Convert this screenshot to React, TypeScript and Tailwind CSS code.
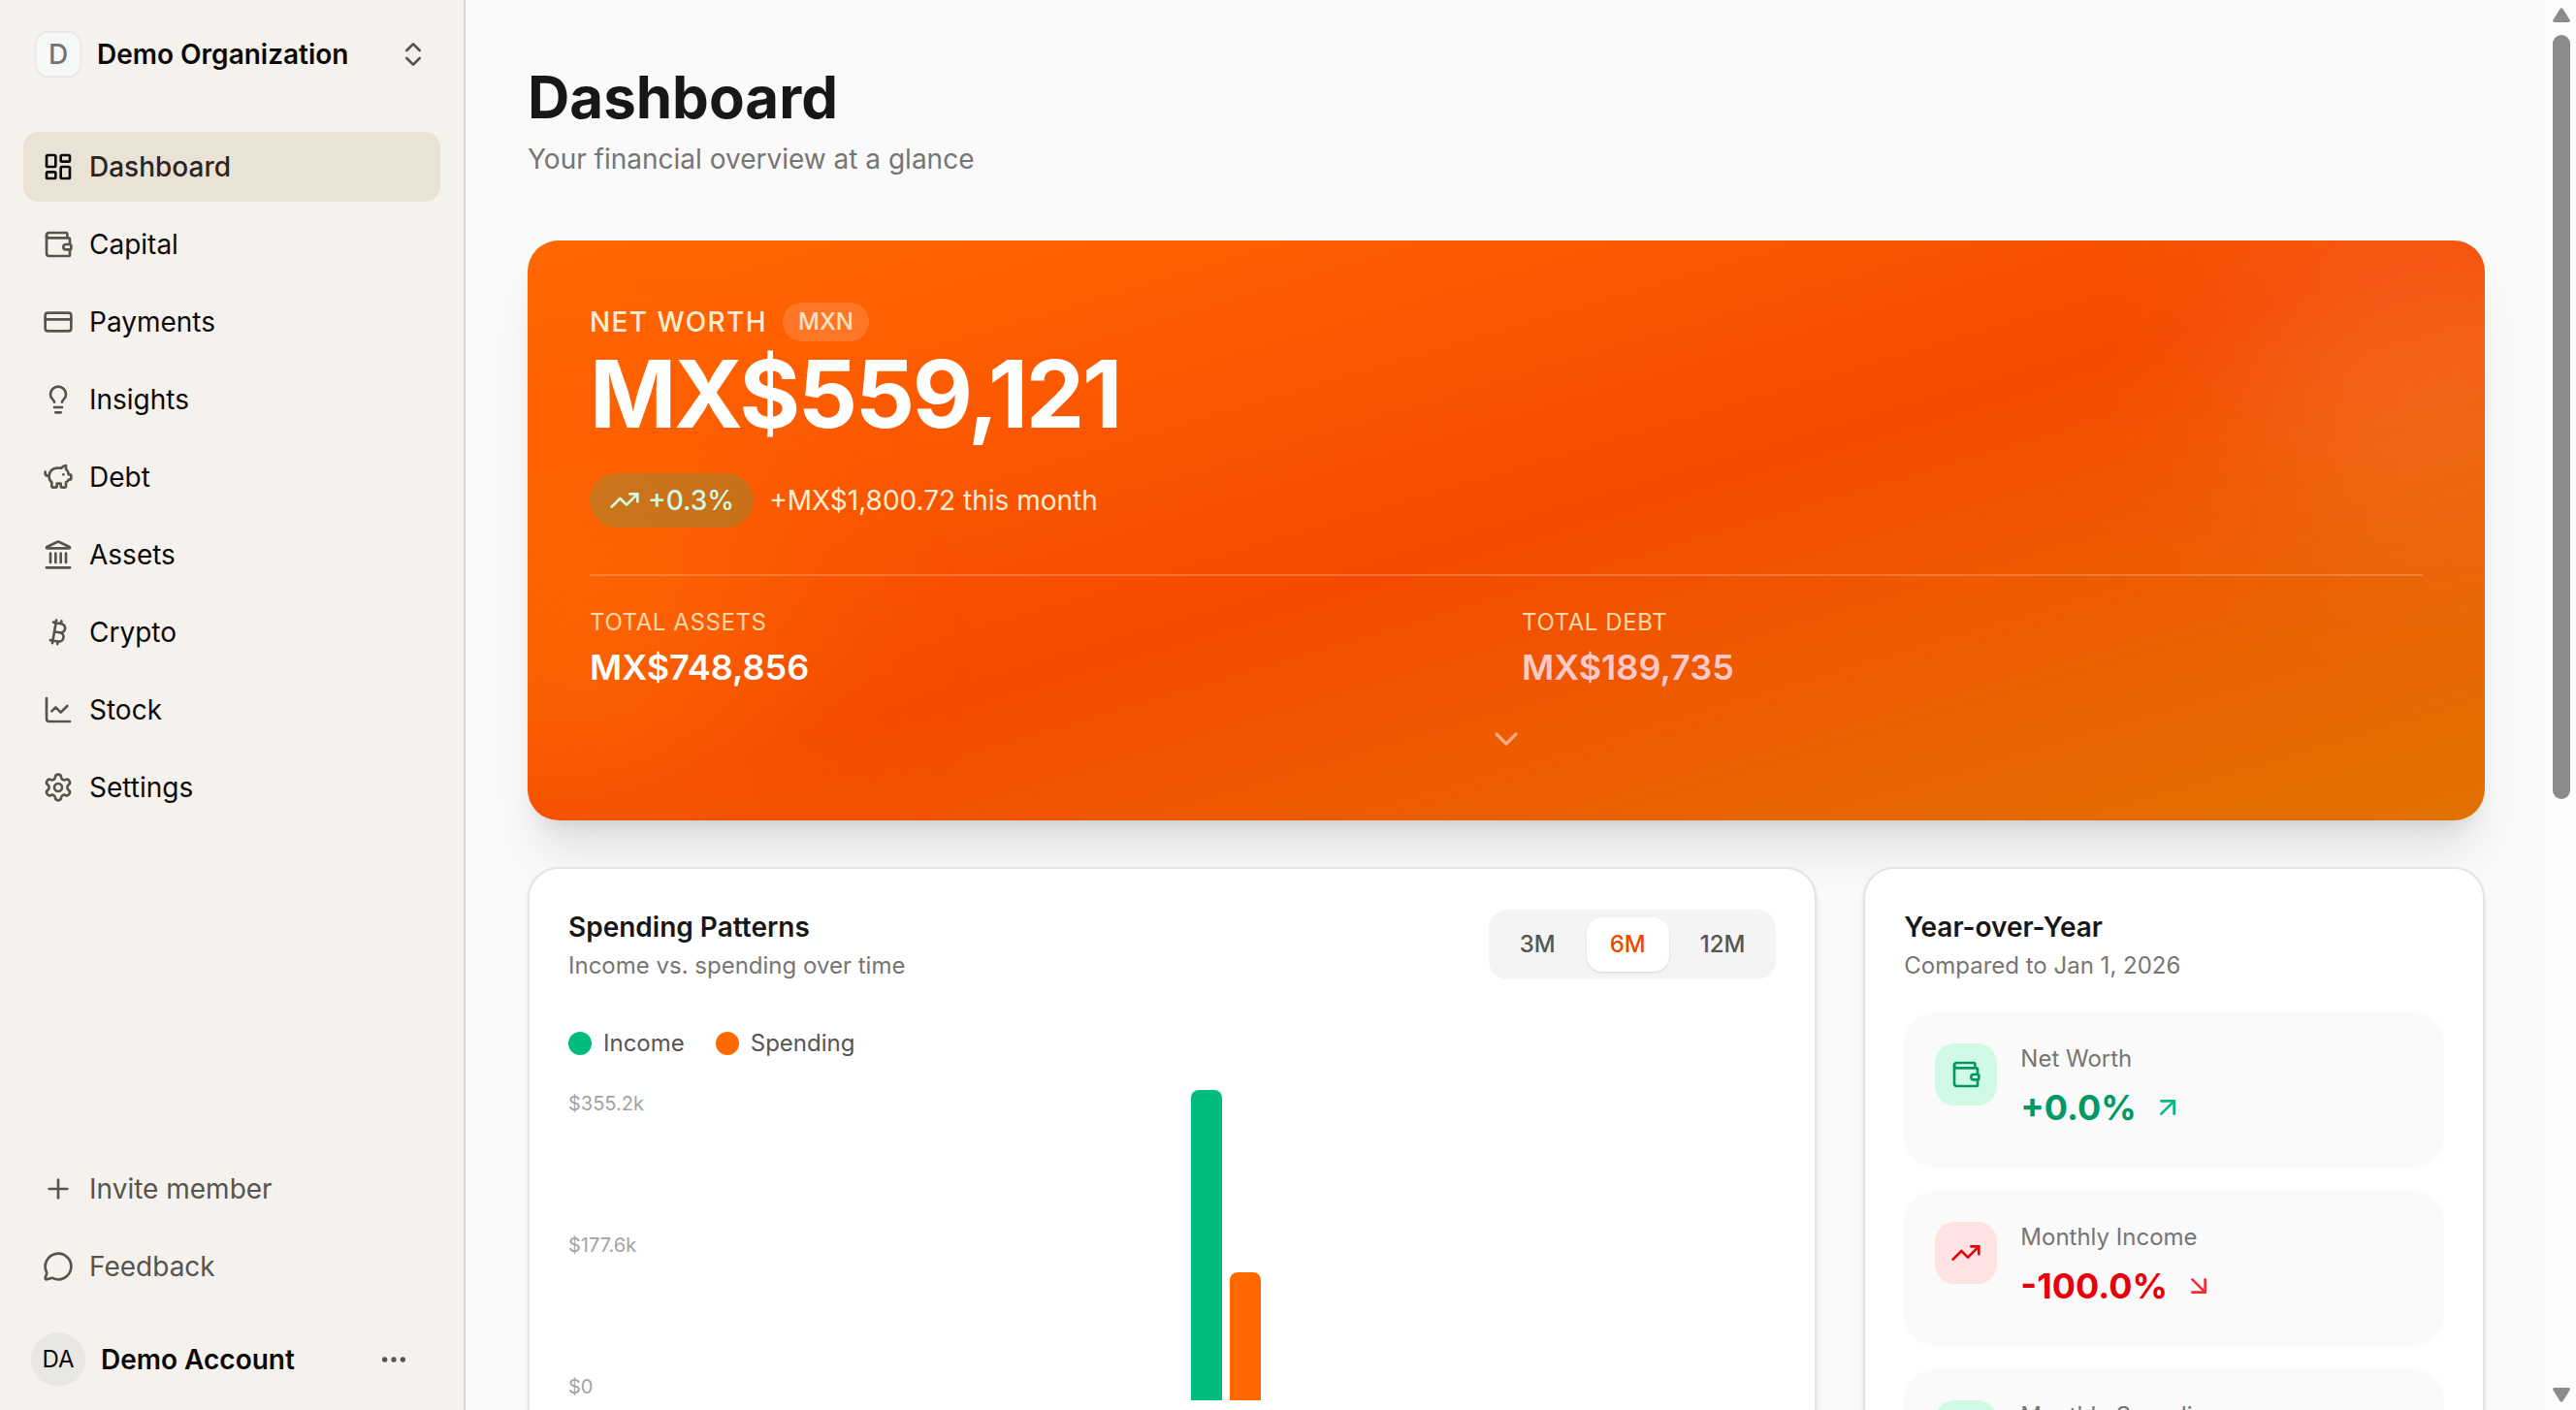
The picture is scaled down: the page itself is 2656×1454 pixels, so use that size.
import type { ReactNode } from "react";
import {
  ArrowDownRight,
  ArrowUpRight,
  Bitcoin,
  ChartLine,
  ChevronDown,
  ChevronsUpDown,
  CreditCard,
  Ellipsis,
  Landmark,
  LayoutDashboard,
  Lightbulb,
  MessageCircle,
  PiggyBank,
  Plus,
  Settings,
  TrendingDown,
  TrendingUp,
  Wallet,
  type LucideIcon,
} from "lucide-react";

const navItems: { label: string; icon: LucideIcon; active?: boolean }[] = [
  { label: "Dashboard", icon: LayoutDashboard, active: true },
  { label: "Capital", icon: Wallet },
  { label: "Payments", icon: CreditCard },
  { label: "Insights", icon: Lightbulb },
  { label: "Debt", icon: PiggyBank },
  { label: "Assets", icon: Landmark },
  { label: "Crypto", icon: Bitcoin },
  { label: "Stock", icon: ChartLine },
  { label: "Settings", icon: Settings },
];

function Sidebar() {
  return (
    <aside className="flex w-[480px] shrink-0 flex-col border-r-2 border-[#d8d6d4] bg-[#f5f1ed] px-6 pt-4 pb-6">
      <button className="flex h-20 items-center gap-4 rounded-2xl px-3 text-left">
        <span className="flex size-12 items-center justify-center rounded-[14px] border-2 border-[#e9eae9] bg-[#f7f8f8] text-[28px] font-medium text-[#737373]">
          D
        </span>
        <span className="flex-1 text-[28px] leading-10 font-semibold text-[#0c0a09]">Demo Organization</span>
        <ChevronsUpDown className="size-8 text-[#57534d]" />
      </button>

      <nav className="mt-10 flex flex-col gap-2">
        {navItems.map(({ label, icon: Icon, active }) => (
          <a
            key={label}
            href="#"
            aria-current={active ? "page" : undefined}
            className={
              active
                ? "flex h-18 items-center gap-4 rounded-2xl bg-[#ebe2d6] px-5 text-[28px] font-medium text-[#292524]"
                : "flex h-18 items-center gap-4 rounded-2xl px-5 text-[28px] text-[#0c0a09]"
            }
          >
            <Icon className={active ? "size-8 text-[#0c0a09]" : "size-8 text-[#57534d]"} />
            {label}
          </a>
        ))}
      </nav>

      <div className="mt-auto flex flex-col gap-2">
        <button className="flex h-18 items-center gap-4 rounded-2xl px-5 text-[28px] text-[#57534d]">
          <Plus className="size-8" />
          Invite member
        </button>
        <button className="flex h-18 items-center gap-4 rounded-2xl px-5 text-[28px] text-[#57534d]">
          <MessageCircle className="size-8" />
          Feedback
        </button>
      </div>

      <button className="mt-8 flex items-center gap-4 pr-8 pl-2 text-left">
        <span className="flex size-14 items-center justify-center rounded-full bg-[#e8e7e3] text-2xl text-[#0c0a09]">
          DA
        </span>
        <span className="flex-1 text-[28px] leading-10 font-semibold text-[#0c0a09]">Demo Account</span>
        <Ellipsis className="size-8 text-[#57534d]" />
      </button>
    </aside>
  );
}

function HeroCard() {
  return (
    <section className="relative overflow-hidden rounded-[32px] bg-linear-to-br from-orange-500 via-orange-600 to-amber-600 p-16">
      <div className="absolute -top-16 -right-32 size-96 rounded-full bg-white/10 blur-[96px]" />
      <div className="absolute -bottom-4 -left-32 size-96 rounded-full bg-orange-400/30 blur-[96px]" />
      <div className="relative">
        <div className="flex items-center gap-4">
          <h2 className="text-[28px] leading-10 font-medium tracking-wider text-orange-100 uppercase">Net Worth</h2>
          <span className="rounded-full bg-white/15 px-4 text-2xl leading-10 font-medium text-orange-100/90">MXN</span>
        </div>
        <p className="mt-1.5 text-8xl leading-none font-bold tracking-tight text-white">MX$559,121</p>
        <div className="mt-8.5 flex items-center gap-4">
          <span className="flex h-14 items-center gap-2 rounded-full bg-emerald-500/20 px-5 text-[28px] font-medium text-emerald-100">
            <TrendingUp className="size-8" />
            +0.3%
          </span>
          <span className="text-[28px] text-orange-100">+MX$1,800.72 this month</span>
        </div>
        <dl className="mt-12 grid grid-cols-2 gap-8 border-t-2 border-white/20 pt-8">
          <div>
            <dt className="text-2xl tracking-wide text-orange-200 uppercase">Total Assets</dt>
            <dd className="mt-1 text-4xl leading-13 font-semibold text-white">MX$748,856</dd>
          </div>
          <div>
            <dt className="text-2xl tracking-wide text-orange-200 uppercase">Total Debt</dt>
            <dd className="mt-1 text-4xl leading-13 font-semibold text-[#ffc9c9]">MX$189,735</dd>
          </div>
        </dl>
        <div className="mt-7 flex justify-center">
          <button aria-label="Show details" className="text-white/50">
            <ChevronDown className="size-10" />
          </button>
        </div>
      </div>
    </section>
  );
}

function Card({ className = "", children }: { className?: string; children: ReactNode }) {
  return (
    <section className={`rounded-[32px] border-2 border-[#e4e4e4] bg-white p-10 shadow-md ${className}`}>
      {children}
    </section>
  );
}

function CardTitle({ title, subtitle }: { title: string; subtitle: string }) {
  return (
    <div>
      <h2 className="text-[28px] leading-10 font-semibold text-[#171717]">{title}</h2>
      <p className="mt-1 text-2xl text-[#777573]">{subtitle}</p>
    </div>
  );
}

const ranges = ["3M", "6M", "12M"];
const bars = [
  { name: "Income", height: 320, color: "w-8 rounded-t-lg bg-[#00bc7d]" },
  { name: "Spending", height: 132, color: "w-8 rounded-t-lg bg-[#ff6900]" },
];

function SpendingCard() {
  return (
    <Card className="col-span-2">
      <div className="flex items-center justify-between">
        <CardTitle title="Spending Patterns" subtitle="Income vs. spending over time" />
        <div className="flex gap-2 rounded-[20px] bg-[#f4f4f4] p-2">
          {ranges.map((range) => (
            <button
              key={range}
              aria-pressed={range === "6M"}
              className={
                range === "6M"
                  ? "h-14 rounded-2xl bg-white px-6 text-2xl font-medium text-[#e84a00] shadow-sm"
                  : "h-14 rounded-2xl px-6 text-2xl font-medium text-[#575553]"
              }
            >
              {range}
            </button>
          ))}
        </div>
      </div>
      <div className="mt-12 flex gap-8 text-2xl text-[#575553]">
        <span className="flex items-center gap-3">
          <span className="size-6 rounded-full bg-[#00bc7d]" />
          Income
        </span>
        <span className="flex items-center gap-3">
          <span className="size-6 rounded-full bg-[#ff6900]" />
          Spending
        </span>
      </div>
      <div className="mt-8 flex gap-3.5">
        <div className="flex h-80 w-24 flex-col justify-between text-xl leading-7 text-[#a3a3a2]">
          <span>$355.2k</span>
          <span>$177.6k</span>
          <span>$0</span>
        </div>
        <div className="flex h-80 flex-1 items-end justify-center gap-2">
          {bars.map((bar) => (
            <div key={bar.name} className={bar.color} style={{ height: bar.height }} />
          ))}
        </div>
      </div>
    </Card>
  );
}

const metrics: { label: string; value: string; up: boolean; good: boolean; icon: LucideIcon }[] = [
  { label: "Net Worth", value: "+0.0%", up: true, good: true, icon: Wallet },
  { label: "Monthly Income", value: "-100.0%", up: false, good: false, icon: TrendingUp },
  { label: "Monthly Spending", value: "-100.0%", up: false, good: true, icon: TrendingDown },
];

function YearCard() {
  return (
    <Card>
      <CardTitle title="Year-over-Year" subtitle="Compared to Jan 1, 2026" />
      <ul className="mt-8 flex flex-col gap-6">
        {metrics.map(({ label, value, up, good, icon: Icon }) => {
          const Arrow = up ? ArrowUpRight : ArrowDownRight;
          return (
            <li key={label} className="flex min-h-40 items-start gap-6 rounded-[32px] bg-[#fafafa] p-8">
              <span
                className={
                  good
                    ? "flex size-16 items-center justify-center rounded-[20px] bg-emerald-100 text-emerald-600"
                    : "flex size-16 items-center justify-center rounded-[20px] bg-[#ffe2e2] text-[#e7000b]"
                }
              >
                <Icon className="size-8" />
              </span>
              <div>
                <p className="text-2xl text-[#777573]">{label}</p>
                <p className="mt-2 flex items-center gap-4 text-4xl leading-13 font-bold">
                  <span className={good ? "text-emerald-600" : "text-[#e7000b]"}>{value}</span>
                  <Arrow className={good ? "size-8 text-emerald-500" : "size-8 text-[#fb2c36]"} />
                </p>
              </div>
            </li>
          );
        })}
      </ul>
    </Card>
  );
}

function ScrollRail() {
  return (
    <div aria-hidden="true" className="flex w-[30px] shrink-0 flex-col items-center bg-[#fcfcfc] pt-2 pb-2">
      <svg viewBox="0 0 18 15" className="h-[15px] w-[18px] fill-[#8b8b8b]">
        <path d="M7.6 0.9Q9-0.6 10.4 0.9L17.5 12.2Q18.6 15 16 15H2Q-0.6 15 0.5 12.2Z" />
      </svg>
      <div className="mt-[13px] h-[788px] w-[18px] rounded-full bg-[#8b8b8b]" />
      <svg viewBox="0 0 18 15" className="mt-auto h-[15px] w-[18px] rotate-180 fill-[#8b8b8b]">
        <path d="M7.6 0.9Q9-0.6 10.4 0.9L17.5 12.2Q18.6 15 16 15H2Q-0.6 15 0.5 12.2Z" />
      </svg>
    </div>
  );
}

export default function App() {
  return (
    <div className="flex h-screen overflow-hidden bg-[#fafafa] font-['Inter',sans-serif]">
      <Sidebar />
      <main className="min-w-0 flex-1 overflow-hidden px-16 pt-16">
        <h1 className="text-6xl leading-[72px] font-bold text-[#171717]">Dashboard</h1>
        <p className="mt-2 text-[28px] leading-10 text-[#777573]">Your financial overview at a glance</p>
        <div className="mt-16 rounded-[32px] shadow-[0_40px_50px_-10px_rgba(0,0,0,0.1),0_16px_20px_-12px_rgba(0,0,0,0.1)]">
          <HeroCard />
        </div>
        <div className="mt-12 grid grid-cols-3 gap-12">
          <SpendingCard />
          <YearCard />
        </div>
      </main>
      <ScrollRail />
    </div>
  );
}
